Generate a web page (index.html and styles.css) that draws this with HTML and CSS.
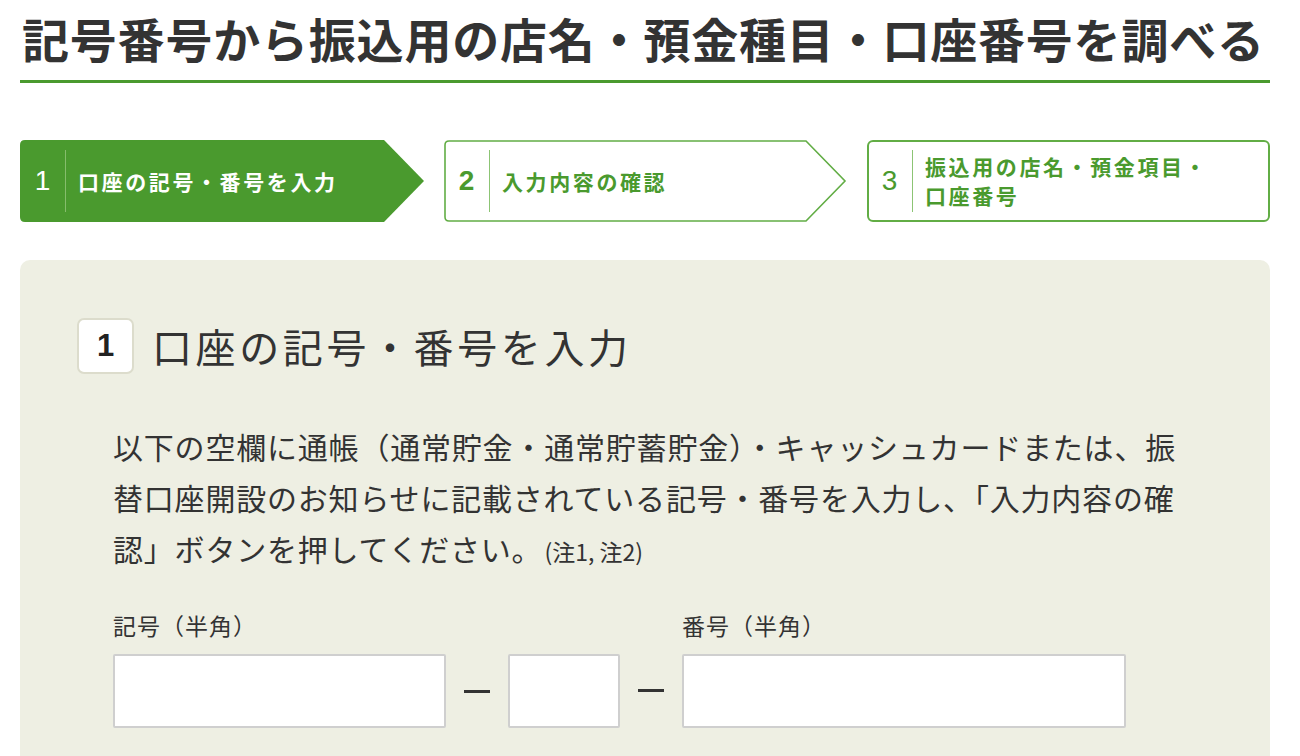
FILE: index.html
```html
<!DOCTYPE html>
<html lang="ja">
<head>
    <meta charset="UTF-8">
    <meta name="viewport" content="width=device-width, initial-scale=1.0">
    <title>記号番号から振込用の店名・預金種目・口座番号を調べる</title>
    <link rel="stylesheet" href="styles.css">
</head>
<body>
    <div class="page">
        <h1 class="page-title">記号番号から振込用の店名・預金種目・口座番号を調べる</h1>

        <ol class="steps">
            <li class="step step-current">
                <svg class="step-shape" viewBox="0 0 404 82" preserveAspectRatio="none">
                    <path d="M5,0 H364 L404,41 L364,82 H5 Q0,82 0,77 V5 Q0,0 5,0 Z" fill="#4a9a2e"/>
                </svg>
                <span class="step-num">1</span>
                <span class="step-label">口座の記号・番号を入力</span>
            </li>
            <li class="step step-next">
                <svg class="step-shape" viewBox="0 0 403 82" preserveAspectRatio="none">
                    <path d="M5,1 H362 L401,41 L362,81 H5 Q1,81 1,77 V5 Q1,1 5,1 Z" fill="#fff" stroke="#62ad45" stroke-width="1.6"/>
                </svg>
                <span class="step-num num-bold">2</span>
                <span class="step-label">入力内容の確認</span>
            </li>
            <li class="step step-last">
                <span class="step-num">3</span>
                <span class="step-label">振込用の店名・預金項目・<br>口座番号</span>
            </li>
        </ol>

        <section class="panel">
            <h2 class="panel-title"><span class="badge">1</span>口座の記号・番号を入力</h2>

            <div class="panel-body">
                <p class="lead">以下の空欄に通帳（通常貯金・通常貯蓄貯金）・キャッシュカードまたは、振替口座開設のお知らせに記載されている記号・番号を入力し、「入力内容の確認」ボタンを押してください。<small class="note">(注1, 注2)</small></p>

                <form class="number-form">
                    <div class="field">
                        <label for="kigou1">記号（半角）</label>
                        <div class="field-row">
                            <input type="text" id="kigou1" class="input-kigou">
                            <span class="dash"></span>
                            <input type="text" id="kigou2" class="input-small">
                        </div>
                    </div>
                    <span class="dash"></span>
                    <div class="field">
                        <label for="bangou">番号（半角）</label>
                        <input type="text" id="bangou" class="input-bangou">
                    </div>
                </form>
            </div>
        </section>
    </div>
</body>
</html>
```

FILE: styles.css
```css
body {
    margin: 0;
    font-family: "Noto Sans CJK JP", "Noto Sans", sans-serif;
    color: #333;
    background-color: #fff;
}
.page {
    width: 1250px;
    margin-left: 20px;
}
.page-title {
    margin: 0;
    padding: 8px 0 12px 2px;
    font-size: 47px;
    line-height: 60px;
    letter-spacing: 0.8px;
    font-weight: bold;
    color: #333;
    white-space: nowrap;
    border-bottom: 3px solid #4a9a2e;
}
.steps {
    list-style: none;
    margin: 57px 0 0;
    padding: 0;
    display: flex;
    gap: 20px;
}
.step {
    position: relative;
    height: 82px;
    display: flex;
    align-items: center;
    color: #4a9a2e;
    box-sizing: border-box;
}
.step-current { width: 404px; color: #fff; }
.step-next { width: 403px; }
.step-last {
    width: 403px;
    border: 2px solid #62ad45;
    border-radius: 6px;
    background-color: #fff;
}
.step-shape {
    position: absolute;
    left: 0;
    top: 0;
    width: 100%;
    height: 100%;
}
.step-num {
    position: relative;
    width: 45px;
    height: 62px;
    display: flex;
    align-items: center;
    justify-content: center;
    font-family: "Liberation Sans", Arial, sans-serif;
    font-size: 28px;
    border-right: 1px solid #8cc474;
}
.step-current .step-num { border-right-color: #86bd6c; }
.step-last .step-num { margin-left: -2px; }
.num-bold { font-weight: bold; }
.step-label {
    position: relative;
    padding-left: 12px;
    font-size: 21px;
    line-height: 29px;
    letter-spacing: 2.6px;
    font-weight: bold;
}
.panel {
    margin-top: 38px;
    background-color: #eeefe3;
    border-radius: 10px 10px 0 0;
    padding: 57px 40px 40px 57px;
    min-height: 500px;
}
.panel-title {
    margin: 0;
    display: flex;
    align-items: center;
    font-size: 40px;
    font-weight: normal;
    color: #333;
    letter-spacing: 3.6px;
}
.badge {
    width: 53px;
    height: 52px;
    margin-right: 18px;
    display: flex;
    align-items: center;
    justify-content: center;
    background-color: #fff;
    border: 2px solid #dcdccc;
    border-radius: 7px;
    font-family: "Liberation Sans", Arial, sans-serif;
    font-weight: bold;
    font-size: 31px;
    letter-spacing: 0;
    color: #222;
}
.panel-body {
    padding-left: 36px;
    width: 1085px;
}
.lead {
    margin: 46px 0 0;
    font-size: 30px;
    line-height: 51px;
    letter-spacing: 0.8px;
    color: #333;
}
.note {
    font-size: 23px;
    line-height: 1;
    letter-spacing: 0;
    margin-left: 2px;
}
.number-form {
    margin-top: 35px;
    display: flex;
    align-items: flex-end;
    gap: 18px;
}
.field label {
    display: block;
    font-size: 23px;
    line-height: 32px;
    letter-spacing: 1px;
    margin-bottom: 13px;
    color: #333;
}
.field-row {
    display: flex;
    align-items: center;
    gap: 18px;
}
.number-form > .dash { margin-bottom: 36px; }
.dash {
    display: block;
    width: 26px;
    height: 3px;
    background-color: #333;
}
input[type="text"] {
    height: 74px;
    box-sizing: border-box;
    border: 2px solid #cfcfcf;
    border-radius: 2px;
    background-color: #fff;
    font-size: 24px;
    padding: 0 10px;
}
.input-kigou { width: 333px; }
.input-small { width: 112px; }
.input-bangou { width: 444px; }
```
